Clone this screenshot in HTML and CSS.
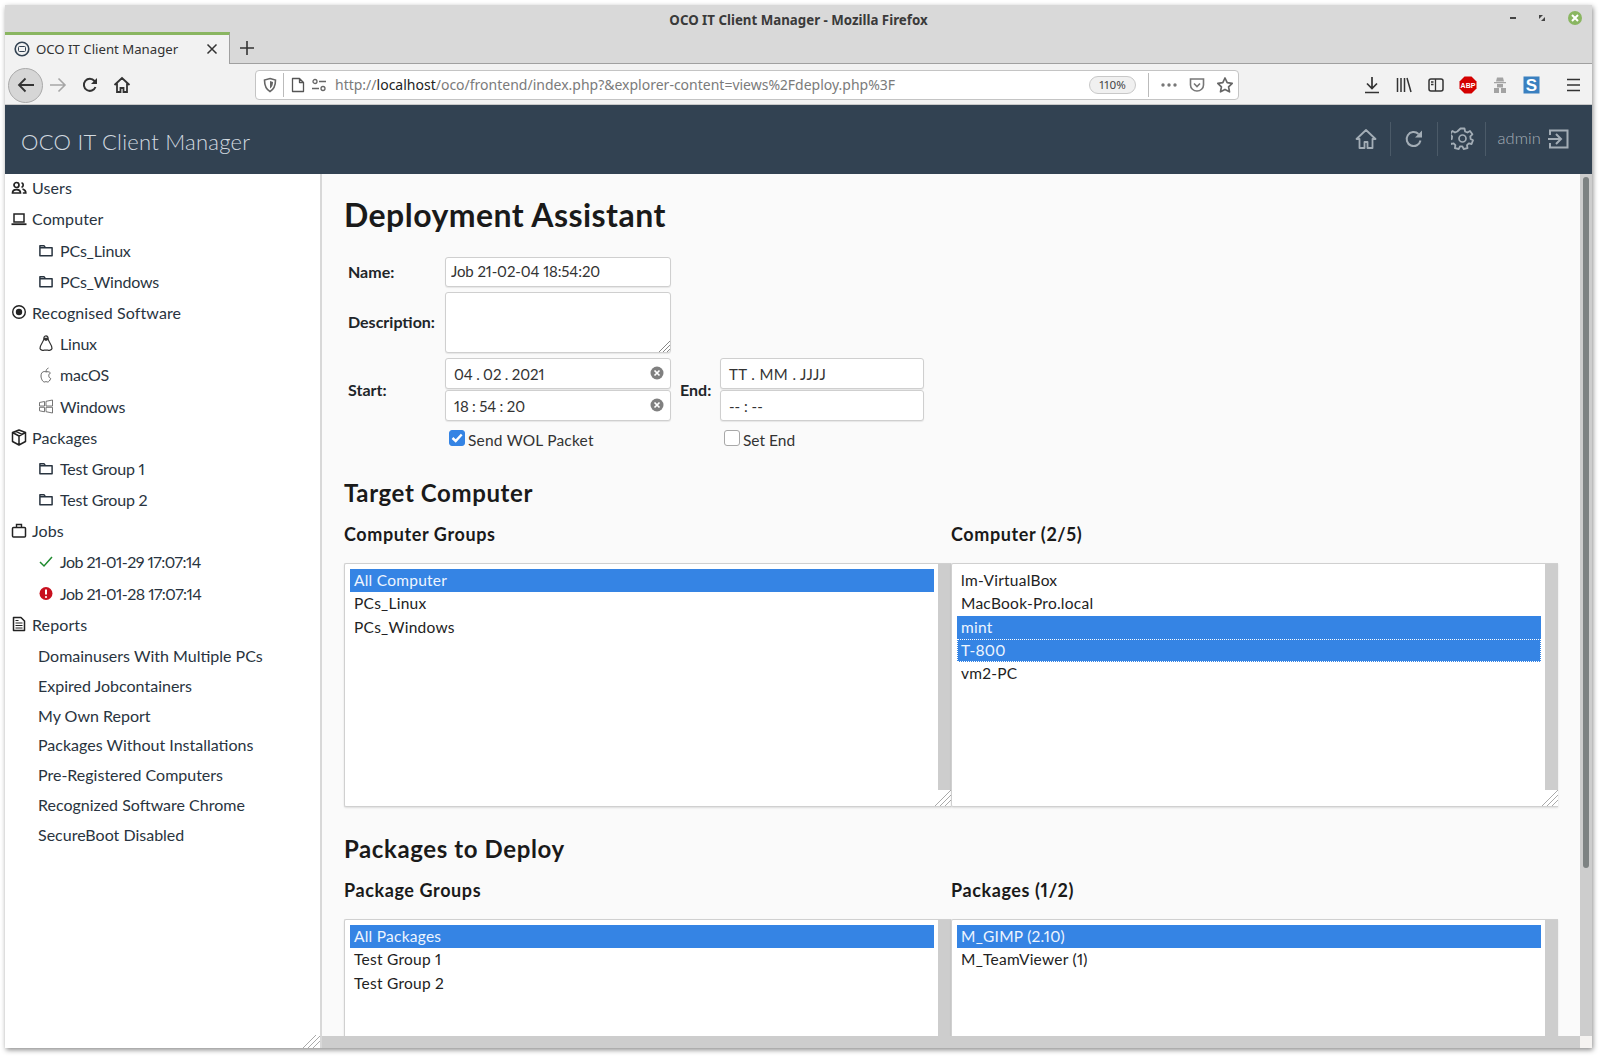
FILE: index.html
```html
<!DOCTYPE html>
<html lang="en">
<head>
    <meta charset="UTF-8">
    <title>OCO IT Client Manager - Mozilla Firefox</title>
    <link rel="stylesheet" href="styles.css">
</head>
<body>
<svg class="defs" width="0" height="0">
    <symbol id="i-folder" viewBox="0 0 16 16"><path d="M1.500 3h4.500l1.300 2h7.200v8.500h-13z M1.500 5h5.800" fill="none" stroke="currentColor" stroke-width="1.600" stroke-linejoin="round"/></symbol>
</svg>
<div class="window">
    <!-- Firefox -->
    <div class="titlebar">
        <div class="title">OCO IT Client Manager - Mozilla Firefox</div>
        <div class="win-buttons">
            <span class="win-min"></span>
            <svg class="win-max" width="8" height="8" viewBox="0 0 8 8"><path d="M1 1h4L1 5zM7 7H3l4-4z" fill="#444"/></svg>
            <span class="win-close">
                <svg width="8" height="8" viewBox="0 0 8 8"><path d="M1 1l6 6M7 1l-6 6" stroke="#fff" stroke-width="2"/></svg>
            </span>
        </div>
    </div>
    <div class="tabbar">
        <div class="tab">
            <svg class="favicon" width="16" height="16" viewBox="0 0 16 16"><circle cx="8" cy="8" r="6.800" fill="none" stroke="#324252" stroke-width="1.600"/><rect x="4.500" y="5.500" width="7" height="5" rx="1" fill="none" stroke="#324252"/></svg>
            <span class="tab-label">OCO IT Client Manager</span>
            <svg class="tab-close" width="12" height="12" viewBox="0 0 12 12"><path d="M1.500 1.500l9 9M10.500 1.500l-9 9" stroke="#333" stroke-width="1.500"/></svg>
        </div>
        <svg class="new-tab" width="16" height="16" viewBox="0 0 16 16"><path d="M8 1v14M1 8h14" stroke="#333" stroke-width="1.600"/></svg>
    </div>
    <div class="toolbar">
        <div class="nav-back">
            <svg width="20" height="20" viewBox="0 0 20 20"><path d="M18 10H3M9.500 3.500L3 10l6.500 6.500" fill="none" stroke="#333" stroke-width="1.800"/></svg>
        </div>
        <svg class="nav-fwd" width="20" height="20" viewBox="0 0 20 20"><path d="M2 10h15M10.500 3.500L17 10l-6.500 6.500" fill="none" stroke="#a6a6a6" stroke-width="1.600"/></svg>
        <svg class="nav-reload" width="18" height="18" viewBox="0 0 18 18"><path d="M14.500 11a6 6 0 1 1-1-6l1.500 2" fill="none" stroke="#333" stroke-width="2"/><path d="M16 2v6h-6z" fill="#333"/></svg>
        <svg class="nav-home" width="18" height="18" viewBox="0 0 18 18"><path d="M1.500 9L9 2l7.500 7M4 7.500V16h3.500v-4h3v4H14V7.500" fill="none" stroke="#333" stroke-width="1.800"/></svg>
        <div class="urlbar">
            <svg class="url-shield" width="14" height="16" viewBox="0 0 14 16"><path d="M7 1.500l5.500 1.500c0 5-1 9-5.500 11.500C2.500 12 1.500 8 1.500 3z" fill="none" stroke="#666" stroke-width="1.600"/><path d="M7 4l3 1c0 3-.8 5-3 6.500z" fill="#666"/></svg>
            <span class="url-sep"></span>
            <svg class="url-page" width="14" height="16" viewBox="0 0 14 16"><path d="M1.500 1.500h7l4 4v9h-11zM8.500 1.500v4h4" fill="none" stroke="#555" stroke-width="1.300" stroke-linejoin="round"/></svg>
            <svg class="url-perm" width="16" height="14" viewBox="0 0 16 14"><circle cx="4" cy="3.500" r="2" fill="none" stroke="#666" stroke-width="1.300"/><path d="M8 3.500h7M1 10.500h7" stroke="#666" stroke-width="1.500"/><circle cx="12" cy="10.500" r="2" fill="none" stroke="#666" stroke-width="1.300"/></svg>
            <span class="url-text">http://<b>localhost</b>/oco/frontend/index.php?&amp;explorer-content=views%2Fdeploy.php%3F</span>
            <span class="url-zoom">110%</span>
            <span class="url-sep url-sep-right"></span>
            <svg class="url-dots" width="16" height="4" viewBox="0 0 16 4"><circle cx="2" cy="2" r="1.700" fill="#777"/><circle cx="8" cy="2" r="1.700" fill="#777"/><circle cx="14" cy="2" r="1.700" fill="#777"/></svg>
            <svg class="url-pocket" width="16" height="16" viewBox="0 0 16 16"><path d="M1.500 2h13v6a6.500 6 0 0 1-13 0z" fill="none" stroke="#777" stroke-width="1.600"/><path d="M5 6.500l3 3 3-3" fill="none" stroke="#777" stroke-width="1.600"/></svg>
            <svg class="url-star" width="18" height="18" viewBox="0 0 18 18"><path d="M9 2l2.200 4.600 5 .7-3.600 3.500.9 5L9 13.400 4.500 15.800l.9-5L1.800 7.300l5-.7z" fill="none" stroke="#666" stroke-width="1.700" stroke-linejoin="round"/></svg>
        </div>
        <div class="tool-icons">
            <svg class="t-down" width="16" height="18" viewBox="0 0 16 18"><path d="M8 1v11M3 7.500L8 12.500l5-5M1 16.500h14" fill="none" stroke="#333" stroke-width="1.700"/></svg>
            <svg class="t-lib" width="16" height="16" viewBox="0 0 16 16"><path d="M1.500 1v14M5 1v14M8.500 1v14M11 1l4 14" stroke="#333" stroke-width="1.500" fill="none"/></svg>
            <svg class="t-side" width="16" height="16" viewBox="0 0 16 16"><rect x="1" y="2" width="14" height="12" rx="2" fill="none" stroke="#333" stroke-width="1.500"/><path d="M7.500 2v12M3 5h2.500M3 7.500h2.500" stroke="#333" stroke-width="1.300"/></svg>
            <svg class="t-abp" width="18" height="18" viewBox="0 0 18 18"><path d="M5.500 0.500h7l5 5v7l-5 5h-7l-5-5v-7z" fill="#d40000"/><text x="9" y="12" text-anchor="middle" class="abp-text">ABP</text></svg>
            <svg class="t-spy" width="14" height="18" viewBox="0 0 14 18"><path d="M4 1.500h6l1 4H3zM1 6h12v1.200H1zM4 8h6v3.500H4zM1 12h5v5H1zM8 12h5v5H8z" fill="#a3a3a3"/></svg>
            <svg class="t-s" width="17" height="18" viewBox="0 0 17 18"><rect x=".5" y=".5" width="16" height="17" fill="#3a80c0"/><text x="8.500" y="15" text-anchor="middle" class="s-text">S</text></svg>
            <svg class="t-menu" width="16" height="14" viewBox="0 0 16 14"><path d="M1 1.500h13M1 7h13M1 12.500h13" stroke="#333" stroke-width="1.700"/></svg>
        </div>
    </div>

    <!-- App header -->
    <header class="app-header">
        <div class="app-title">OCO IT Client Manager</div>
        <div class="app-actions">
            <svg class="act act-home" width="22" height="22" viewBox="0 0 22 22"><path d="M11 2L1.500 11h3v9h5v-6h3v6h5v-9h3z" fill="none" stroke="#a3adb6" stroke-width="1.800" stroke-linejoin="round"/></svg>
            <span class="act-sep"></span>
            <svg class="act act-reload" width="20" height="20" viewBox="0 0 20 20"><path d="M16.500 11.500a7 7 0 1 1-2-6.500" fill="none" stroke="#a3adb6" stroke-width="2"/><path d="M18 1.500v7h-7z" fill="#a3adb6"/></svg>
            <span class="act-sep"></span>
            <svg class="act act-gear" width="23" height="23" viewBox="0 0 23 23"><circle cx="11.500" cy="11.500" r="3.500" fill="none" stroke="#a3adb6" stroke-width="1.700"/><path d="M9.500 1.500h4l.6 3 2.300 1 2.600-1.600 2.400 3.400-2.100 2 .3 2.600 2.400 1.300-1.400 3.800-2.800-.6-1.800 1.800.5 2.900-3.900.9-1.200-2.700h-2.400l-1.200 2.700-3.900-.9.500-2.900-1.800-1.800-2.800.6-1.400-3.800 2.400-1.300.3-2.600-2.100-2 2.400-3.400 2.600 1.600 2.300-1z" fill="none" stroke="#a3adb6" stroke-width="1.800" stroke-linejoin="round"/></svg>
            <span class="act-sep"></span>
            <span class="act-user">admin</span>
            <svg class="act act-logout" width="22" height="22" viewBox="0 0 22 22"><path d="M3 7V2.500h17.500v17H3V15M1 11h12M9 6l5 5-5 5" fill="none" stroke="#a3adb6" stroke-width="2"/></svg>
        </div>
    </header>

    <div class="app-body">
        <nav class="sidebar">
            <div class="tree">
                <a class="row"><svg class="ic" width="16" height="16" viewBox="0 0 16 16"><circle cx="5.500" cy="5" r="2.500" fill="none" stroke="#222" stroke-width="1.700"/><path d="M1.500 13c0-4.500 8-4.500 8 0zM10.500 2.800a2.400 2.400 0 0 1 0 4.600M11.500 9c2 .5 3.300 2 3.300 4h-3" fill="none" stroke="#222" stroke-width="1.700"/></svg>Users</a>
                <a class="row"><svg class="ic" width="16" height="16" viewBox="0 0 16 16"><path d="M3 3h10v8H3z" fill="none" stroke="#222" stroke-width="1.500"/><path d="M.5 13.200h15" stroke="#222" stroke-width="1.800"/></svg>Computer</a>
                <a class="row sub"><svg class="ic" width="15" height="15"><use href="#i-folder"/></svg>PCs_Linux</a>
                <a class="row sub"><svg class="ic" width="15" height="15"><use href="#i-folder"/></svg>PCs_Windows</a>
                <a class="row"><svg class="ic" width="16" height="16" viewBox="0 0 16 16"><circle cx="8" cy="8" r="6.300" fill="none" stroke="#222" stroke-width="1.400"/><circle cx="8" cy="8" r="3.200" fill="#222"/></svg>Recognised Software</a>
                <a class="row sub"><svg class="ic" width="15" height="17" viewBox="0 0 15 17"><path d="M7.500 .8c2 0 2.200 2 2.200 3.500 0 2 4 5.500 3.800 9.200-.5 1.700-3 2.200-4 1.700H5.500c-1 .5-3.500 0-4-1.700C1.300 9.800 5.300 6.300 5.300 4.300 5.300 2.800 5.500 .8 7.500 .8z" fill="none" stroke="#333" stroke-width="1.200"/><path d="M5.500 2.800h4v2.200l-2 1-2-1z" fill="#333"/></svg>Linux</a>
                <a class="row sub"><svg class="ic" width="15" height="16" viewBox="0 0 15 16"><path d="M7.500 5c-1-.8-5-1-5 4 0 3 2 6 3.300 6 .8 0 1-.4 1.700-.4s.9.400 1.700.4c1 0 2.300-1.500 3-3.500-2.500-1-2.500-4.500-.3-5.500C11 4.500 8.500 4.500 7.500 5zM7.500 5c0-2 1-3.500 2.500-4" fill="none" stroke="#555" stroke-width=".9"/></svg>macOS</a>
                <a class="row sub"><svg class="ic" width="15" height="15" viewBox="0 0 15 15"><path d="M1 3.500l5-1v4.500H1zM7.500 2.300l6.500-1.300V7H7.500zM1 8.300h5v4.500l-5-1zM7.500 8.300H14V14l-6.500-1.300z" fill="none" stroke="#666" stroke-width=".9"/></svg>Windows</a>
                <a class="row"><svg class="ic" width="16" height="17" viewBox="0 0 16 17"><path d="M8 1l6.500 2.500v9L8 16l-6.500-3.500v-9zM1.500 3.500L8 7l6.500-3.500M8 7v9M4.500 2.200l6.500 3.200" fill="none" stroke="#222" stroke-width="1.500" stroke-linejoin="round"/></svg>Packages</a>
                <a class="row sub"><svg class="ic" width="15" height="15"><use href="#i-folder"/></svg>Test Group 1</a>
                <a class="row sub"><svg class="ic" width="15" height="15"><use href="#i-folder"/></svg>Test Group 2</a>
                <a class="row"><svg class="ic" width="15" height="15" viewBox="0 0 15 15"><rect x="1" y="4.500" width="13" height="9.500" rx="1" fill="none" stroke="#222" stroke-width="1.500"/><path d="M5 4.500V1.500h5v3" fill="none" stroke="#222" stroke-width="1.400"/></svg>Jobs</a>
                <a class="row sub job"><svg class="ic" width="15" height="15" viewBox="0 0 15 15"><path d="M1.500 8l4 4 8-9" fill="none" stroke="#1e8a2e" stroke-width="1.500"/></svg>Job 21-01-29 17:07:14</a>
                <a class="row sub job"><svg class="ic" width="15" height="15" viewBox="0 0 15 15"><circle cx="7.500" cy="7.500" r="6.500" fill="#c8101e"/><path d="M7.500 3.500v5" stroke="#fff" stroke-width="2"/><circle cx="7.500" cy="11" r="1.100" fill="#fff"/></svg>Job 21-01-28 17:07:14</a>
                <a class="row"><svg class="ic" width="14" height="16" viewBox="0 0 14 16"><path d="M1.500 1.500h7.500l3.500 3.500v9.500h-11z" fill="none" stroke="#222" stroke-width="1.500" stroke-linejoin="round"/><path d="M3.500 7h7M3.500 9.500h7M3.500 12h7M3.500 4.500h3" stroke="#222" stroke-width="1.200"/></svg>Reports</a>
            </div>
            <div class="reports">
                <a class="row">Domainusers With Multiple PCs</a>
                <a class="row">Expired Jobcontainers</a>
                <a class="row">My Own Report</a>
                <a class="row">Packages Without Installations</a>
                <a class="row">Pre-Registered Computers</a>
                <a class="row">Recognized Software Chrome</a>
                <a class="row">SecureBoot Disabled</a>
            </div>
            <svg class="corner" width="17" height="13" viewBox="0 0 17 13"><path d="M0 13L13 0M5 13L17 1M10 13L17 6" stroke="#aaa"/></svg>
        </nav>

        <div class="content-wrap">
            <div class="content-row">
                <main class="content">
                    <h1>Deployment Assistant</h1>
                    <form class="deploy-form">
                        <label class="f-label f-raised">Name:</label>
                        <input class="f-input" type="text" value="Job 21-02-04 18:54:20">
                        <label class="f-label f-raised">Description:</label>
                        <div class="f-area">
                            <svg class="area-grip" width="12" height="12" viewBox="0 0 12 12"><path d="M1 12L12 1M5 12l7-7M9 12l3-3" stroke="#888"/></svg>
                        </div>
                        <label class="f-label">Start:</label>
                        <div class="f-stack">
                            <div class="f-field f-num">04 . 02 . 2021<svg class="clear" width="14" height="14" viewBox="0 0 14 14"><circle cx="7" cy="7" r="6.500" fill="#808080"/><path d="M4.500 4.500l5 5M9.500 4.500l-5 5" stroke="#fff" stroke-width="1.700"/></svg></div>
                            <div class="f-field f-num">18 : 54 : 20<svg class="clear" width="14" height="14" viewBox="0 0 14 14"><circle cx="7" cy="7" r="6.500" fill="#808080"/><path d="M4.500 4.500l5 5M9.500 4.500l-5 5" stroke="#fff" stroke-width="1.700"/></svg></div>
                        </div>
                        <label class="f-label f-end">End:</label>
                        <div class="f-stack">
                            <div class="f-field f-mask">TT . MM . JJJJ</div>
                            <div class="f-field">-- : --</div>
                        </div>
                        <label class="f-check f-col2"><span class="box box-on"><svg width="12" height="10" viewBox="0 0 12 10"><path d="M1.500 5l3.200 3 6-6.500" fill="none" stroke="#fff" stroke-width="2.400"/></svg></span>Send WOL Packet</label>
                        <label class="f-check f-col4"><span class="box"></span>Set End</label>
                    </form>

                    <h2>Target Computer</h2>
                    <div class="pick-grid">
                        <div>
                            <h3>Computer Groups</h3>
                            <div class="listbox">
                                <div class="options">
                                    <div class="opt sel">All Computer</div>
                                    <div class="opt">PCs_Linux</div>
                                    <div class="opt">PCs_Windows</div>
                                </div>
                                <div class="list-scroll"></div>
                                <svg class="corner" width="17" height="17" viewBox="0 0 17 17"><path d="M1 17L17 1M6 17L17 6M11 17l6-6" stroke="#aaa"/></svg>
                            </div>
                        </div>
                        <div>
                            <h3>Computer (2/5)</h3>
                            <div class="listbox">
                                <div class="options">
                                    <div class="opt">lm-VirtualBox</div>
                                    <div class="opt">MacBook-Pro.local</div>
                                    <div class="opt sel">mint</div>
                                    <div class="opt sel focus">T-800</div>
                                    <div class="opt">vm2-PC</div>
                                </div>
                                <div class="list-scroll"></div>
                                <svg class="corner" width="17" height="17" viewBox="0 0 17 17"><path d="M1 17L17 1M6 17L17 6M11 17l6-6" stroke="#aaa"/></svg>
                            </div>
                        </div>
                    </div>

                    <h2 class="h2-packages">Packages to Deploy</h2>
                    <div class="pick-grid">
                        <div>
                            <h3>Package Groups</h3>
                            <div class="listbox">
                                <div class="options">
                                    <div class="opt sel">All Packages</div>
                                    <div class="opt">Test Group 1</div>
                                    <div class="opt">Test Group 2</div>
                                </div>
                                <div class="list-scroll"></div>
                            </div>
                        </div>
                        <div>
                            <h3>Packages (1/2)</h3>
                            <div class="listbox">
                                <div class="options">
                                    <div class="opt sel">M_GIMP (2.10)</div>
                                    <div class="opt">M_TeamViewer (1)</div>
                                </div>
                                <div class="list-scroll"></div>
                            </div>
                        </div>
                    </div>
                </main>
                <div class="vscroll"><div class="vthumb"></div></div>
            </div>
            <div class="hscroll"><div class="hcorner"></div></div>
        </div>
    </div>
</div>
</body>
</html>
```

FILE: styles.css
```css
html, body {
    margin: 0;
    height: 100%;
    background-color: #fff;
    overflow: hidden;
}

body {
    font-family: "Lato", "Noto Sans", sans-serif;
    font-variant-numeric: proportional-nums;
    color: #212529;
}

.defs {
    position: absolute;
}

.window {
    margin: 5px 0 0 5px;
    width: 1587px;
    height: 1043px;
    display: flex;
    flex-direction: column;
    box-shadow: 1px 2px 5px rgba(0, 0, 0, 0.45);
    overflow: hidden;
}

/* Firefox */
.titlebar {
    height: 27px;
    flex: none;
    background-color: #d9d9d9;
    display: flex;
    justify-content: center;
    align-items: center;
    position: relative;
}

.title {
    font-family: "Noto Sans", sans-serif;
    font-size: 13.300px;
    font-weight: 700;
    color: #3a3a3a;
    margin-top: 2px;
}

.win-buttons {
    position: absolute;
    top: 6px;
    right: 10px;
    display: flex;
    align-items: center;
    gap: 22px;
}

.win-min {
    width: 6px;
    height: 2px;
    background-color: #444;
}

.win-close {
    width: 14px;
    height: 14px;
    border-radius: 50%;
    background-color: #8ab661;
    display: flex;
    align-items: center;
    justify-content: center;
}

.tabbar {
    height: 32px;
    flex: none;
    box-sizing: border-box;
    background-color: #d9d9d9;
    border-bottom: 1px solid #a0a0a0;
    display: flex;
    align-items: flex-start;
}

.tab {
    width: 225px;
    height: 32px;
    box-sizing: border-box;
    background-color: #f2f2f2;
    border-top: 3px solid #8ab661;
    border-right: 1px solid #a0a0a0;
    display: flex;
    align-items: center;
    padding: 0 11px 2px 9px;
}

.tab-label {
    font-family: "Noto Sans", sans-serif;
    font-size: 13.200px;
    color: #333;
    margin-left: 6px;
    flex: 1;
    white-space: nowrap;
}

.new-tab {
    margin: 8px 0 0 9px;
}

.toolbar {
    height: 41px;
    flex: none;
    box-sizing: border-box;
    background-color: #f2f2f2;
    border-bottom: 1px solid #c8c8c8;
    display: flex;
    align-items: center;
    padding: 2px 0 0 3px;
}

.nav-back {
    width: 33px;
    height: 33px;
    border-radius: 50%;
    border: 1px solid #aaa;
    background-color: #d6d6d6;
    display: flex;
    align-items: center;
    justify-content: center;
    flex: none;
}

.nav-fwd {
    margin-left: 5px;
}

.nav-reload {
    margin-left: 13px;
}

.nav-home {
    margin-left: 14px;
}

.urlbar {
    width: 984px;
    height: 30px;
    box-sizing: border-box;
    margin-left: 124px;
    padding-right: 4px;
    background-color: #fff;
    border: 1px solid #c4c4c4;
    border-radius: 4px;
    display: flex;
    align-items: center;
    font-family: "Noto Sans", sans-serif;
    flex: none;
}

.url-shield {
    margin-left: 7px;
}

.url-sep {
    width: 1px;
    height: 24px;
    background-color: #bbb;
    margin-left: 6px;
}

.url-page {
    margin-left: 7px;
}

.url-perm {
    margin-left: 6px;
}

.url-text {
    margin: 0 0 2px 8px;
    font-size: 14px;
    color: #7b7b7b;
    white-space: nowrap;
    flex: 1;
}

.url-text b {
    font-weight: 400;
    color: #222;
}

.url-zoom {
    width: 47px;
    height: 18px;
    box-sizing: border-box;
    background-color: #f0f0f0;
    border: 1px solid #c8c8c8;
    border-radius: 9px;
    font-size: 11.500px;
    color: #444;
    text-align: center;
    line-height: 16px;
}

.url-sep-right {
    margin-left: 12px;
}

.url-dots {
    margin-left: 12px;
}

.url-pocket {
    margin-left: 12px;
}

.url-star {
    margin-left: 11px;
}

.tool-icons {
    display: flex;
    align-items: center;
    margin-left: 125px;
}

.t-lib, .t-side, .t-spy, .t-s {
    margin-left: 16px;
}

.t-abp {
    margin-left: 15px;
}

.t-menu {
    margin-left: 26px;
}

.abp-text {
    font-family: "Liberation Sans", sans-serif;
    font-size: 7px;
    font-weight: 700;
    fill: #fff;
}

.s-text {
    font-family: "Liberation Sans", sans-serif;
    font-size: 17px;
    font-weight: 700;
    fill: #fff;
}

/* App header */
.app-header {
    height: 69px;
    flex: none;
    background-color: #324252;
    display: flex;
    align-items: center;
    justify-content: space-between;
    padding: 0 23px 0 16px;
}

.app-title {
    font-size: 22px;
    font-weight: 300;
    color: #d3dae0;
    letter-spacing: 0.250px;
    margin-top: 4px;
}

.app-actions {
    display: flex;
    align-items: center;
    height: 34px;
    margin-top: -2px;
}

.act-sep {
    width: 1px;
    height: 34px;
    background-color: #4b5a68;
}

.act-home {
    margin-right: 13px;
}

.act-reload {
    margin: 0 13px;
}

.act-gear {
    margin: 0 11px 0 13px;
}

.act-user {
    font-size: 16.500px;
    font-weight: 300;
    color: #a3adb6;
    margin: 0 0 2px 11px;
    letter-spacing: 0.100px;
}

.act-logout {
    margin-left: 6px;
}

.app-body {
    flex: 1;
    display: flex;
    min-height: 0;
}

/* Menu */
.sidebar {
    width: 315px;
    flex: none;
    background-color: #fff;
    border-right: 2px solid #d8d8d8;
    position: relative;
    font-size: 16px;
}

.tree {
    display: flex;
    flex-direction: column;
    gap: 3.200px;
    margin-top: -0.300px;
}

.reports {
    display: flex;
    flex-direction: column;
    gap: 1.850px;
    margin-top: 3.100px;
    padding-left: 33px;
}

.row {
    height: 28px;
    display: flex;
    align-items: center;
    color: #293440;
    white-space: nowrap;
}

.tree .row {
    padding-left: 6px;
    letter-spacing: 0.100px;
}

.tree .row.sub {
    padding-left: 33px;
    letter-spacing: -0.200px;
}

.tree .row.job {
    letter-spacing: -0.550px;
}

.ic {
    width: 16px;
    margin-right: 5px;
    flex: none;
}

.tree .row.sub .ic {
    margin-right: 6px;
}

.corner {
    position: absolute;
    right: 0;
    bottom: 0;
}

/* Main */
.content-wrap {
    flex: 1;
    min-width: 0;
    display: flex;
    flex-direction: column;
}

.content-row {
    flex: 1;
    display: flex;
    min-height: 0;
}

.content {
    flex: 1;
    min-width: 0;
    background-color: #fafafa;
    padding: 21px 22px 0 22px;
    overflow: hidden;
}

.vscroll {
    width: 12px;
    flex: none;
    background-color: #cdcdcd;
    padding-top: 3px;
}

.vthumb {
    width: 6px;
    height: 691px;
    margin-left: 3px;
    border-radius: 3px;
    background-color: #7d8282;
}

.hscroll {
    height: 12px;
    flex: none;
    background-color: #cdcdcd;
    display: flex;
    justify-content: flex-end;
}

.hcorner {
    width: 12px;
    background-color: #f5f3f1;
}

h1 {
    margin: 0;
    font-size: 32px;
    line-height: 40px;
    font-weight: 700;
    color: #1a1a1a;
    letter-spacing: 0.450px;
}

h2 {
    margin: 0;
    font-size: 24px;
    line-height: 30px;
    font-weight: 700;
    color: #1a1a1a;
    letter-spacing: 0.600px;
}

h3 {
    margin: 0 0 17px;
    font-size: 18px;
    line-height: 24px;
    font-weight: 700;
    color: #1a1a1a;
    letter-spacing: 0.600px;
}

.deploy-form {
    display: grid;
    grid-template-columns: 101px 226px 49px 204px;
    row-gap: 5px;
    align-items: center;
    margin: 22px 0 29px;
    font-size: 15px;
}

.f-label {
    grid-column: 1;
    font-weight: 700;
    padding-left: 4px;
    color: #212529;
    font-size: 16px;
}

.f-label.f-raised {
    padding-bottom: 2px;
}

.f-label.f-end {
    grid-column: 3;
    padding-left: 9px;
}

.f-input, .f-field, .f-area {
    box-sizing: border-box;
    background-color: #fff;
    border: 1px solid #cfcfcf;
    border-radius: 3px;
    box-shadow: 0 1px 1px rgba(0, 0, 0, 0.08);
}

.f-input {
    width: 226px;
    height: 30px;
    padding: 0 5px 2px;
    font: inherit;
    font-variant-numeric: proportional-nums;
    letter-spacing: -0.100px;
    color: #333;
    outline: none;
}

.f-area {
    width: 226px;
    height: 61px;
    position: relative;
}

.area-grip {
    position: absolute;
    right: 0;
    bottom: 0;
}

.f-stack {
    display: flex;
    flex-direction: column;
    gap: 1px;
}

.f-field {
    height: 31px;
    display: flex;
    align-items: center;
    justify-content: space-between;
    padding: 0 6px 0 8px;
    color: #333;
}

.f-num {
    word-spacing: -0.500px;
}

.f-mask {
    letter-spacing: 0.400px;
}

.clear {
    margin: 0 0 1px;
}

.f-check {
    display: flex;
    align-items: center;
    margin: 5px 0 0 4px;
    font-size: 15.500px;
    color: #333;
}

.f-col2 {
    grid-column: 2;
    letter-spacing: 0.200px;
}

.f-col4 {
    grid-column: 4;
}

.box {
    width: 16px;
    height: 16px;
    box-sizing: border-box;
    border: 1px solid #a8a8a8;
    border-radius: 3px;
    background-color: #fff;
    margin-right: 3px;
    margin-top: -5px;
    display: flex;
    align-items: center;
    justify-content: center;
}

.box-on {
    background-color: #3584e4;
    border-color: #3584e4;
}

.pick-grid {
    display: grid;
    grid-template-columns: 1fr 1fr;
}

h2 + .pick-grid {
    margin-top: 14px;
}

.h2-packages {
    margin-top: 27px;
}

.listbox {
    height: 244px;
    box-sizing: border-box;
    background-color: #fff;
    border: 1px solid #d0d0d0;
    border-right: none;
    border-radius: 2px 0 0 2px;
    display: flex;
    position: relative;
    box-shadow: 0 1px 2px rgba(0, 0, 0, 0.12);
    color: #222;
}

.options {
    flex: 1;
    padding: 5px 4px 5px 5px;
    font-size: 15.500px;
    letter-spacing: 0.250px;
}

.opt {
    height: 23.300px;
    line-height: 23px;
    padding-left: 4px;
    white-space: nowrap;
}

.opt.sel {
    background-color: #3584e4;
    color: #eef5ff;
}

.opt.focus {
    outline: 1px dotted #fff;
    outline-offset: -1px;
}

.list-scroll {
    width: 13px;
    height: 226px;
    background-color: #cdcdcd;
    flex: none;
}
```
